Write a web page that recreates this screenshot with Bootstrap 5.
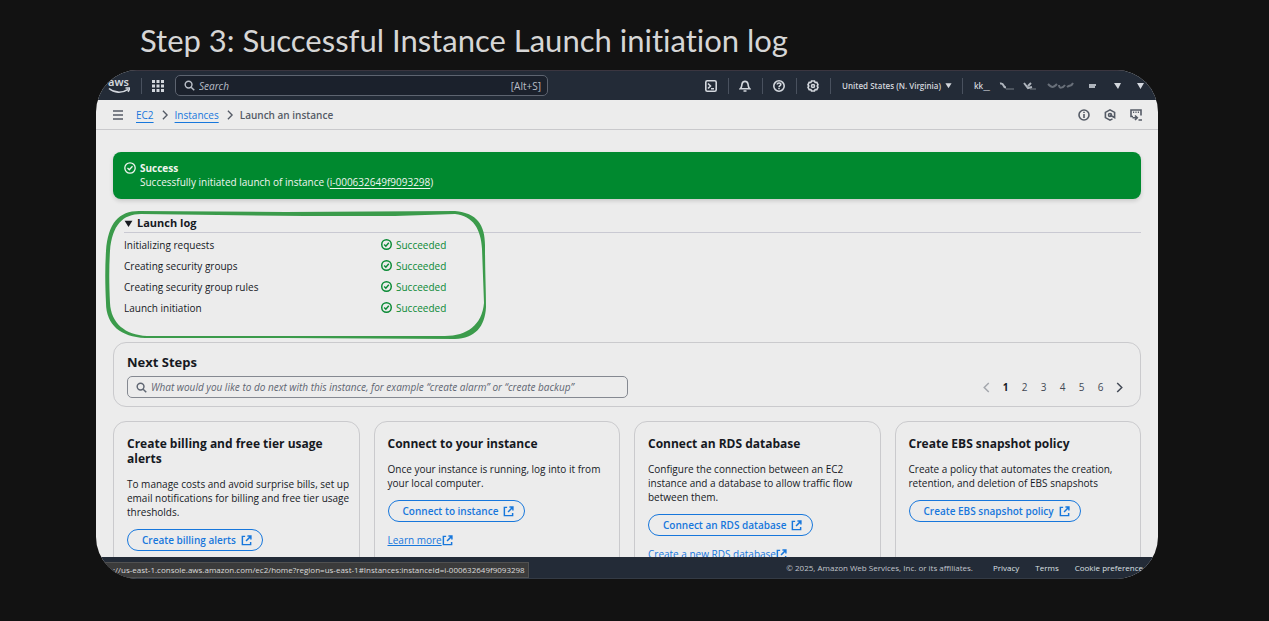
<!DOCTYPE html>
<html lang="en">
<head>
<meta charset="utf-8">
<meta name="viewport" content="width=device-width, initial-scale=1">
<title>Launch an instance | EC2</title>
<link href="https://cdn.jsdelivr.net/npm/bootstrap@5.3.0/dist/css/bootstrap.min.css" rel="stylesheet">
<style>
  body { background: #121212; font-family: "Open Sans", "Noto Sans", sans-serif; font-size: 10px; line-height: 14px; color: #16191f; padding: 0 111px 42px 96px; }
  svg { display: block; flex: none; fill: none; stroke: currentColor; stroke-width: 1.6; }
  .step-title { font-family: "Excalifont", Lato, sans-serif; font-size: 31px; line-height: 40px; color: #d6d6d6; padding: 20px 0 10px 44px; font-variant-ligatures: none; }
  .console { background: #ececec; border-radius: 42px; position: relative; min-height: 0; }
  .topbar { background: #232b37; color: #d3d7dd; height: 30px; border-top: 1px solid #3b3640; padding: 0 14px 0 12px; }
  .rule { width: 1px; height: 16px; background: #49515e; }
  .rule-gap { margin: 0 10px 0 11px; }
  .search { height: 21px; border-radius: 5px; border: 1px solid #5d6470; background: #1b212c; padding: 0 6px 0 8px; width: 373px; color: #b9bec7; margin-left: 11px; }
  .search input, .ask input { background: none; border: 0; outline: 0; padding: 0; color: inherit; min-width: 0; }
  input::placeholder { color: inherit; font-style: italic; opacity: 1; }
  .plain { background: none; border: 0; padding: 0; color: inherit; }
  .tool { padding: 0 11px 0 10px; }
  .fs-nav { font-size: 8px; font-weight: 600; }
  .region { padding: 0 10px 0 11px; }
  .account { padding-left: 11px; }
  .crumbs { height: 30px; border-bottom: 1px solid #c9c9cc; padding: 0 16px; color: #555b66; font-weight: 600; }
  .crumbs a, .blue { color: #1777dc; }
  .crumbs a { text-underline-offset: 3px; font-weight: 500; }
  .crumbs .menu { margin-right: 12px; }
  .crumb-gap { margin: 0 5px 0 6px; }
  .crumb-tools { gap: 14px; }
  .content { padding: 22px 17px 0; min-height: 0; }
  .flash { background: #00892f; color: #f0f5f0; border-radius: 8px; padding: 9px 11px; min-height: 47px; box-shadow: 0 2px 4px rgba(0,0,0,.15); margin-bottom: 15px; }
  .flash svg { margin-top: 1px; stroke-width: 1.3; }
  .flash a { color: inherit; text-underline-offset: 2px; }
  .log { position: relative; padding-left: 11px; height: 127px; margin-bottom: 1px; }
  .log-head { border-bottom: 1px solid #c9c9d2; height: 19px; font-size: 11px; font-weight: 700; }
  .log-table { margin-top: 1px; }
  .log-table td { height: 21px; padding: 0; }
  .log-table td:first-child { width: 257px; }
  .ok { color: #0a8a35; }
  .sketch { position: absolute; left: -8px; top: -3px; pointer-events: none; }
  .panel { border: 1px solid #cacacd; border-radius: 13px; padding: 11px 11px 8px 13px; }
  .panel h1 { font-size: 13px; line-height: 16px; font-weight: 700; margin-bottom: 6px; }
  .ask { height: 22px; border: 1px solid #858991; border-radius: 5px; padding: 0 8px; color: #5f6672; }
  .pages button { width: 19px; color: #424955; }
  .pages .fw-bold { color: #16191f; }
  .cards { margin-top: 14px; gap: 14px; }
  .step { border: 1px solid #cacacd; border-radius: 13px; padding: 14px 4px 14px 13px; height: 200px; }
  .step h2 { font-size: 12px; line-height: 15px; font-weight: 700; margin-bottom: 11px; padding-right: 12px; }
  .step p { margin-bottom: 10px; }
  .pill { color: #1777dc; border: 1px solid #1777dc; border-radius: 11px; height: 22px; padding: 0 10px 0 14px; background: none; font-weight: 600; margin-bottom: 11px; gap: 5px; }
  .foot { background: #232b37; color: #c2c6cd; height: 22px; border-bottom: 1px solid #343b45; font-size: 8px; padding-right: 15px; }
  .foot a { color: #dde0e4; text-decoration: none; font-weight: 500; }
  .status-url { position: absolute; left: 0; bottom: 1px; background: #3b3b3b; color: #dcdcdc; border: 1px solid #515151; font-size: 8px; line-height: 14px; padding: 0 3px 0 16px; white-space: nowrap; }
</style>
</head>
<body class="vh-100 d-flex flex-column overflow-hidden">
<svg width="0" height="0" class="position-absolute" aria-hidden="true">
  <symbol id="ext" viewBox="0 0 12 12"><path d="M4.500 1.500H1.500v9h9V7.500M7 1.200h3.800V5M10.500 1.500L5.500 6.500"/></symbol>
  <symbol id="check" viewBox="0 0 12 12"><circle cx="6" cy="6" r="5.200"/><path d="M3.500 6l1.800 1.800 3.200-3.600"/></symbol>
  <symbol id="lens" viewBox="0 0 12 12"><circle cx="5" cy="5" r="3.700"/><path d="M7.800 7.800l3.400 3.400"/></symbol>
  <symbol id="next" viewBox="0 0 12 12"><path d="M3.500 1L8.500 6l-5 5"/></symbol>
  <symbol id="down" viewBox="0 0 8 8"><path d="M.5 1.500h7L4 7z" fill="currentColor" stroke="none"/></symbol>
</svg>
<div class="step-title text-nowrap">Step 3: Successful Instance Launch initiation log</div>
<div class="console flex-fill d-flex flex-column overflow-hidden">
  <header class="topbar d-flex align-items-center flex-shrink-0">
    <a href="#" class="text-reset" aria-label="AWS home"><svg width="22" height="16" viewBox="0 0 22 16"><text x="0" y="8" font-family="Noto Sans" font-size="11" font-weight="600" fill="currentColor" stroke="none">aws</text><path d="M1 10.500c5 4.500 13 5 19 .8M17.500 10h4c0 1.500-.5 2.500-1.500 3.800"/></svg></a>
    <span class="rule rule-gap"></span>
    <button class="plain" aria-label="Services"><svg width="12" height="12" viewBox="0 0 12 12"><path fill="currentColor" stroke="none" d="M0 0h3v3H0zM4.500 0h3v3h-3zM9 0h3v3H9zM0 4.500h3v3H0zM4.500 4.500h3v3h-3zM9 4.500h3v3H9zM0 9h3v3H0zM4.500 9h3v3h-3zM9 9h3v3H9z"/></svg></button>
    <div class="search d-flex align-items-center gap-1 me-auto">
      <svg width="11" height="11"><use href="#lens"/></svg>
      <input class="flex-fill" type="search" placeholder="Search" aria-label="Search"><span>[Alt+S]</span>
    </div>
    <div class="d-flex align-items-center">
      <button class="plain tool" aria-label="CloudShell"><svg width="12" height="12" viewBox="0 0 12 12"><rect x=".8" y=".8" width="10.400" height="10.400" rx="1.500"/><path d="M3 3.500L5.500 6 3 8.500M6 8.700h3"/></svg></button>
      <span class="rule"></span>
      <button class="plain tool" aria-label="Notifications"><svg width="12" height="12" viewBox="0 0 12 12"><path d="M1.200 8.800C3 7.500 2.500 6 3 4c.8-3.500 5.200-3.500 6 0 .5 2 0 3.500 1.800 4.800zM4.500 11h3"/></svg></button>
      <span class="rule"></span>
      <button class="plain tool" aria-label="Help"><svg width="12" height="12" viewBox="0 0 12 12"><circle cx="6" cy="6" r="5.200"/><path d="M4.200 4.500C4.300 2.500 8 2.600 7.800 4.600 7.700 5.700 6 5.700 6 7.200M6 8v1.300"/></svg></button>
      <span class="rule"></span>
      <button class="plain tool" aria-label="Settings"><svg width="12" height="12" viewBox="0 0 12 12"><path d="M4.500 1h3l.6 1.500 1.700-.1L11 4.700 10.200 6l.8 1.300-1.200 2.300-1.700-.1L7.500 11h-3l-.6-1.500-1.700.1L1 7.300 1.800 6 1 4.700l1.200-2.300 1.700.1z"/><circle cx="6" cy="6" r="1.500"/></svg></button>
      <span class="rule"></span>
      <button class="plain fs-nav region d-flex align-items-center gap-1">United States (N. Virginia) <svg width="7" height="7"><use href="#down"/></svg></button>
      <span class="rule"></span>
      <button class="plain fs-nav account d-flex align-items-center" aria-label="Account">kk__
        <svg width="154" height="12" viewBox="0 0 154 12"><g stroke="#aeb4bc" stroke-width="2"><path d="M10 3.500c5-1 2 4 6 4"/><path d="M16 9h8M40 9h6" stroke-width="1" opacity=".6"/><path d="M34 3l4 5 4-1M41 3l-3 3"/><path d="M58 4c4 4 5 4 9 0M69 5c0 4 4 3 6 0M77 7c4-3 4 0 6-4" opacity=".5"/><path d="M99 5h7M99 7h6"/></g><path d="M124 3h7l-3 6zM147 3h7l-3.500 6z" fill="#d3d7dd" stroke="none"/></svg></button>
    </div>
  </header>
  <nav class="crumbs d-flex align-items-center flex-shrink-0" aria-label="Breadcrumb">
    <button class="plain menu" aria-label="Menu"><svg width="12" height="12" viewBox="0 0 12 12"><path d="M1 2h10M1 6h10M1 10h10"/></svg></button>
    <a href="#">EC2</a>
    <svg class="crumb-gap" width="10" height="10"><use href="#next"/></svg>
    <a href="#">Instances</a>
    <svg class="crumb-gap" width="10" height="10"><use href="#next"/></svg>
    <span>Launch an instance</span>
    <div class="crumb-tools ms-auto d-flex">
      <button class="plain" aria-label="Info"><svg width="12" height="12" viewBox="0 0 12 12"><circle cx="6" cy="6" r="5"/><path d="M6 5v4M6 2.700v1.400"/></svg></button>
      <button class="plain" aria-label="Resources"><svg width="12" height="12" viewBox="0 0 12 12"><path d="M8.500 9.900L6 11.100 1.400 8.600V3.400L6 .9l4.600 2.500v5.200L6 6"/><circle cx="6" cy="6" r="1.500"/></svg></button>
      <button class="plain" aria-label="Console tools"><svg width="12" height="12" viewBox="0 0 12 12"><path d="M3 7.500H1V1h10v5.500M3 3.300h1.200M5.400 3.300h1.200M7.800 3.300H9M2.500 8.800h4M5 6.500l2.300 2.300L5 11M8.500 11H12"/></svg></button>
    </div>
  </nav>
  <main class="content flex-fill overflow-hidden">
    <div class="flash d-flex gap-1" role="status">
      <svg width="12" height="12"><use href="#check"/></svg>
      <div><div class="fw-bold">Success</div>Successfully initiated launch of instance (<a href="#">i-000632649f9093298</a>)</div>
    </div>
    <section class="log">
      <button class="plain log-head w-100 d-flex align-items-center gap-1"><svg width="9" height="9" viewBox="0 0 8 8"><use href="#down"/></svg>Launch log</button>
      <table class="log-table">
        <tbody>
          <tr><td>Initializing requests</td><td><span class="ok d-flex align-items-center gap-1"><svg width="11" height="11" viewBox="0 0 12 12"><use href="#check"/></svg>Succeeded</span></td></tr>
          <tr><td>Creating security groups</td><td><span class="ok d-flex align-items-center gap-1"><svg width="11" height="11" viewBox="0 0 12 12"><use href="#check"/></svg>Succeeded</span></td></tr>
          <tr><td>Creating security group rules</td><td><span class="ok d-flex align-items-center gap-1"><svg width="11" height="11" viewBox="0 0 12 12"><use href="#check"/></svg>Succeeded</span></td></tr>
          <tr><td>Launch initiation</td><td><span class="ok d-flex align-items-center gap-1"><svg width="11" height="11" viewBox="0 0 12 12"><use href="#check"/></svg>Succeeded</span></td></tr>
        </tbody>
      </table>
      <!-- hand-drawn highlight loop around the log -->
      <svg class="sketch" width="382" height="129" viewBox="0 0 382 129"><path fill="#3b9b4b" stroke="none" fill-rule="evenodd" d="M1 40C3 12 14 0 34 0L180 1L350 0C372 2 380 14 380 34C380 60 381 80 381 96C380 116 370 127 350 128L180 127L40 127C16 126 1 114 1 92C0 72 0 56 1 40ZM5 40C7 14 18 3 36 3L200 5L290 5L350 3C368 5 376 18 377 38L379 92C377 114 362 125 340 125L180 125L42 125C20 124 6 112 5 92C4 72 4 56 5 40Z"/></svg>
    </section>
    <section class="panel">
      <h1>Next Steps</h1>
      <div class="d-flex align-items-center justify-content-between">
        <div class="ask col-6 d-flex align-items-center gap-1"><svg width="11" height="11"><use href="#lens"/></svg><input class="flex-fill" type="search" aria-label="Find next step" placeholder="What would you like to do next with this instance, for example “create alarm” or “create backup”"></div>
        <nav class="pages d-flex align-items-center" aria-label="Pages">
          <button class="plain" disabled aria-label="Previous"><svg class="mx-auto" width="11" height="11" viewBox="0 0 12 12" color="#a4a7ad"><path d="M8.500 1L3.500 6l5 5"/></svg></button>
          <button class="plain fw-bold">1</button><button class="plain">2</button><button class="plain">3</button><button class="plain">4</button><button class="plain">5</button><button class="plain">6</button>
          <button class="plain" aria-label="Next"><svg class="mx-auto" width="11" height="11"><use href="#next"/></svg></button>
        </nav>
      </div>
    </section>
    <div class="cards d-flex">
      <article class="step col"><h2>Create billing and free tier usage alerts</h2><p>To manage costs and avoid surprise bills, set up email notifications for billing and free tier usage thresholds.</p>
        <button class="pill d-flex align-items-center">Create billing alerts <svg width="11" height="11" viewBox="0 0 12 12"><use href="#ext"/></svg></button></article>
      <article class="step col"><h2>Connect to your instance</h2><p>Once your instance is running, log into it from your local computer.</p>
        <button class="pill d-flex align-items-center">Connect to instance <svg width="11" height="11" viewBox="0 0 12 12"><use href="#ext"/></svg></button>
        <a href="#" class="blue d-inline-flex align-items-center">Learn more<svg width="11" height="11" viewBox="0 0 12 12"><use href="#ext"/></svg></a></article>
      <article class="step col"><h2>Connect an RDS database</h2><p>Configure the connection between an EC2 instance and a database to allow traffic flow between them.</p>
        <button class="pill d-flex align-items-center">Connect an RDS database <svg width="11" height="11" viewBox="0 0 12 12"><use href="#ext"/></svg></button>
        <a href="#" class="blue d-inline-flex align-items-center">Create a new RDS database<svg width="11" height="11" viewBox="0 0 12 12"><use href="#ext"/></svg></a></article>
      <article class="step col"><h2>Create EBS snapshot policy</h2><p>Create a policy that automates the creation, retention, and deletion of EBS snapshots</p>
        <button class="pill d-flex align-items-center">Create EBS snapshot policy <svg width="11" height="11" viewBox="0 0 12 12"><use href="#ext"/></svg></button></article>
    </div>
  </main>
  <footer class="foot d-flex align-items-center justify-content-end flex-shrink-0 text-nowrap">
    <span class="me-3 pe-1">© 2025, Amazon Web Services, Inc. or its affiliates.</span><a href="#" class="me-3">Privacy</a><a href="#" class="me-3">Terms</a><a href="#">Cookie preference</a>
  </footer>
  <div class="status-url">://us-east-1.console.aws.amazon.com/ec2/home?region=us-east-1#Instances:instanceId=i-000632649f9093298</div>
</div>
<script src="https://cdn.jsdelivr.net/npm/bootstrap@5.3.0/dist/js/bootstrap.bundle.min.js"></script>
</body>
</html>
